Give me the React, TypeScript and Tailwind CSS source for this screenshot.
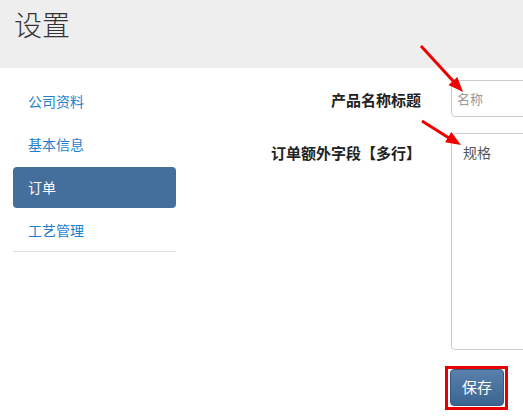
const font = { fontFamily: '"Noto Sans CJK SC", "Noto Sans", sans-serif' };

const navItems = ["公司资料", "基本信息", "订单", "工艺管理"];

const App = () => {
  const active = "订单";

  return (
    <div className="relative w-[523px] h-[416px] overflow-hidden bg-white text-[#333]" style={font}>
      <div className="h-[68px] bg-[#eeeeee] pl-[14px] pt-[6px]">
        <h1 className="text-[28px] leading-[36px] font-light text-[#333]">设置</h1>
      </div>

      <div className="flex">
        <ul className="ml-[13px] mt-[13px] w-[163px] shrink-0 self-start flex flex-col gap-[2px] border-b border-[#dddddd]">
          {navItems.map((item) => (
            <li
              key={item}
              className={
                item === active
                  ? "h-[41px] flex items-center pl-[15px] rounded-[4px] bg-[#446e9b] text-white text-[14px]"
                  : "h-[41px] flex items-center pl-[15px] text-[#1f7fcf] text-[14px]"
              }
            >
              {item}
            </li>
          ))}
        </ul>

        <div className="pt-[12px] grid grid-cols-[245px_240px] gap-x-[30px] gap-y-[16px] shrink-0">
          <label className="text-right pt-[10px] text-[15px] leading-[20px] font-bold text-[#222]">
            产品名称标题
          </label>
          <input
            className="h-[37px] w-[240px] border border-[#cccccc] rounded-[4px] pl-[5px] text-[13px] text-[#555] placeholder:text-[#999] outline-none"
            placeholder="名称"
            style={font}
          />

          <label className="text-right pt-[10px] text-[15px] leading-[20px] font-bold text-[#222]">
            订单额外字段【多行】
          </label>
          <textarea
            className="h-[217px] w-[240px] border border-[#cccccc] rounded-[4px] pl-[11px] pt-[8px] text-[14px] leading-[20px] text-[#555] resize-none outline-none"
            defaultValue="规格"
            style={font}
          />

          <div />
          <div>
            <div className="ml-[-6px] inline-block border-[3px] border-[#e60000] pl-[2px] pr-[1px] pb-[1px]">
              <button className="h-[37px] w-[54px] rounded-[4px] border border-[#355a81] bg-gradient-to-b from-[#5a80ac] to-[#3b6591] text-white text-[15px]">
                保存
              </button>
            </div>
          </div>
        </div>
      </div>

      <svg className="absolute inset-0 pointer-events-none" width="523" height="416">
        <line x1="421" y1="46" x2="454" y2="82" stroke="#ee0000" strokeWidth="3" />
        <polygon points="463,92 448.5,84.9 457.3,76.9" fill="#ee0000" />
        <line x1="422" y1="121" x2="449" y2="138" stroke="#ee0000" strokeWidth="3" />
        <polygon points="461,145 445.1,142.2 451.3,132" fill="#ee0000" />
      </svg>
    </div>
  );
};

export default App;
